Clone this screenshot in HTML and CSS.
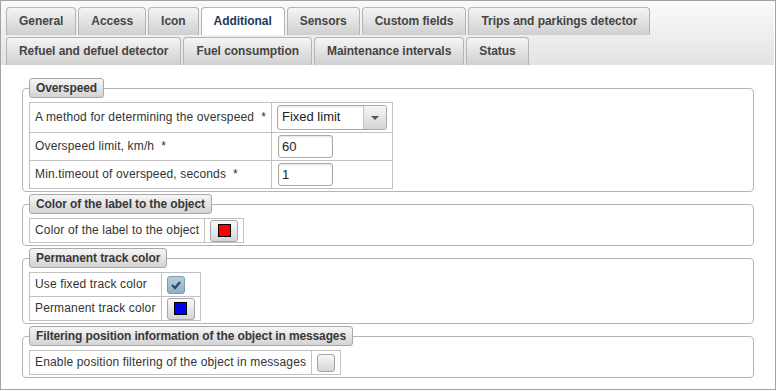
FILE: index.html
```html
<!DOCTYPE html>
<html lang="en">

<head>
    <meta charset="UTF-8">
    <title>Unit properties</title>
    <link rel="stylesheet" href="styles.css">
</head>

<body>
    <div class="panel">
        <div class="tabs">
            <span class="tab">General</span>
            <span class="tab">Access</span>
            <span class="tab">Icon</span>
            <span class="tab active">Additional</span>
            <span class="tab">Sensors</span>
            <span class="tab">Custom fields</span>
            <span class="tab">Trips and parkings detector</span>
            <span class="tab">Refuel and defuel detector</span>
            <span class="tab">Fuel consumption</span>
            <span class="tab">Maintenance intervals</span>
            <span class="tab">Status</span>
        </div>

        <div class="content">
            <fieldset class="group">
                <legend>Overspeed</legend>
                <table class="props props_tall">
                    <tr>
                        <td>A method for determining the overspeed&nbsp; *</td>
                        <td>
                            <div class="dropdown">
                                <span class="dropdown_text">Fixed limit</span>
                                <span class="dropdown_btn"><i class="caret"></i></span>
                            </div>
                        </td>
                    </tr>
                    <tr>
                        <td>Overspeed limit, km/h&nbsp; *</td>
                        <td><input type="text" class="num" value="60"></td>
                    </tr>
                    <tr>
                        <td>Min.timeout of overspeed, seconds&nbsp; *</td>
                        <td><input type="text" class="num" value="1"></td>
                    </tr>
                </table>
            </fieldset>

            <fieldset class="group">
                <legend>Color of the label to the object</legend>
                <table class="props">
                    <tr>
                        <td>Color of the label to the object</td>
                        <td><button type="button" class="color_btn"><span class="swatch red"></span></button></td>
                    </tr>
                </table>
            </fieldset>

            <fieldset class="group">
                <legend>Permanent track color</legend>
                <table class="props">
                    <tr>
                        <td>Use fixed track color</td>
                        <td>
                            <span class="check on">
                                <svg width="16" height="16" viewBox="0 0 16 16">
                                    <polyline points="4,8 7,11 12,5" fill="none" stroke="#2d4b66" stroke-width="2.2" />
                                </svg>
                            </span>
                        </td>
                    </tr>
                    <tr>
                        <td>Permanent track color</td>
                        <td><button type="button" class="color_btn"><span class="swatch blue"></span></button></td>
                    </tr>
                </table>
            </fieldset>

            <fieldset class="group">
                <legend>Filtering position information of the object in messages</legend>
                <table class="props">
                    <tr>
                        <td>Enable position filtering of the object in messages</td>
                        <td><span class="check"></span></td>
                    </tr>
                </table>
            </fieldset>
        </div>
    </div>
</body>

</html>
```

FILE: styles.css
```css
*,
::before,
::after {
    box-sizing: border-box;
}

body {
    margin: 0;
    font-family: "Liberation Sans", Arial, sans-serif;
    font-size: 12px;
    color: #333;
}

.panel {
    width: 776px;
    height: 390px;
    border: 1px solid #a3a3a3;
}

/* tabs */

.tabs {
    display: flex;
    flex-wrap: wrap;
    column-gap: 2px;
    row-gap: 2px;
    padding: 6px 0 0 5px;
    margin-right: 1px;
    background: linear-gradient(#fafafa, #e3e3e3);
}

.tab {
    height: 28px;
    line-height: 27px;
    padding: 0 12px;
    border: 1px solid #b4b4b4;
    border-bottom: none;
    border-radius: 4px 4px 0 0;
    background: linear-gradient(#f5f5f5, #cfcfcf);
    font-weight: bold;
    color: #454545;
    white-space: nowrap;
    letter-spacing: -0.05px;
}

.tab.active {
    background: #fff;
    color: #203a5c;
}

/* groups */

.content {
    padding-top: 13px;
}

.group {
    margin: 0 21px 2px;
    padding: 4px 6px 2px;
    border: 1px solid #b4b4b4;
    border-radius: 4px;
}

.group legend {
    margin: 0;
    padding: 0 6px;
    height: 20px;
    line-height: 18px;
    border: 1px solid #a8a8a8;
    border-radius: 3px;
    background: linear-gradient(#f6f6f6, #d3d3d3);
    font-weight: bold;
    color: #383838;
    letter-spacing: -0.12px;
}

.props {
    border-collapse: collapse;
}

.props td {
    padding: 0 5px;
    line-height: 23px;
    border: 1px solid #c2c2c2;
    white-space: nowrap;
    letter-spacing: 0.15px;
}

.props_tall td {
    padding: 2px 5px;
}

/* controls */

.dropdown {
    display: flex;
    width: 110px;
    height: 25px;
    border: 1px solid #a9a9a9;
    border-radius: 3px;
    background: #fff;
    box-shadow: inset 0 1px 2px rgba(0, 0, 0, 0.1);
    overflow: hidden;
    letter-spacing: 0;
}

.dropdown_text {
    flex: 1;
    padding-left: 4px;
    line-height: 21px;
    font-size: 13px;
    color: #222;
}

.dropdown_btn {
    width: 23px;
    display: flex;
    justify-content: center;
    align-items: center;
    border-left: 1px solid #c6c6c6;
    background: linear-gradient(#f7f7f7, #d4d4d4);
}

.caret {
    width: 0;
    height: 0;
    border-left: 4px solid transparent;
    border-right: 4px solid transparent;
    border-top: 4px solid #4c5766;
}

.num {
    display: block;
    width: 55px;
    height: 23px;
    margin-left: 1px;
    padding: 0 3px;
    border: 1px solid #a9a9a9;
    border-radius: 3px;
    box-shadow: inset 0 1px 2px rgba(0, 0, 0, 0.12);
    font-family: "Liberation Sans", Arial, sans-serif;
    font-size: 13px;
    color: #222;
}

.color_btn {
    display: flex;
    justify-content: center;
    align-items: center;
    width: 28px;
    height: 22px;
    padding: 0;
    border: 1px solid #a6a6a6;
    border-radius: 3px;
    background: linear-gradient(#f9f9f9, #d5d5d5);
}

.swatch {
    width: 13px;
    height: 13px;
    border: 1px solid #000;
}

.swatch.red {
    background: #ff0000;
}

.swatch.blue {
    background: #0000ff;
}

.check {
    display: flex;
    width: 18px;
    height: 18px;
    border: 1px solid #a3a3a3;
    border-radius: 3px;
    background: linear-gradient(#f7f7f7, #d6d6d6);
}

.check.on {
    border-color: #7c9cb1;
    background: linear-gradient(#b6cedc, #8fb0c4);
}
```
